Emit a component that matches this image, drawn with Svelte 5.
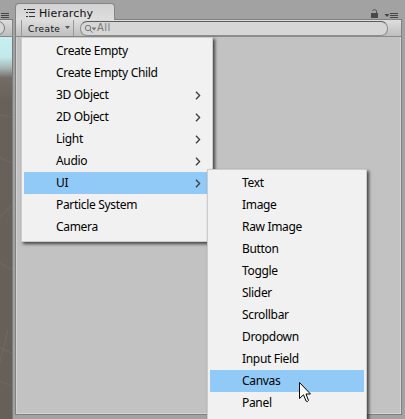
<script>
  const createItems = [
    { label: 'Create Empty' },
    { label: 'Create Empty Child' },
    { label: '3D Object', sub: true },
    { label: '2D Object', sub: true },
    { label: 'Light', sub: true },
    { label: 'Audio', sub: true },
    { label: 'UI', sub: true, active: true },
    { label: 'Particle System' },
    { label: 'Camera' }
  ];
  const uiItems = ['Text', 'Image', 'Raw Image', 'Button', 'Toggle', 'Slider', 'Scrollbar', 'Dropdown', 'Input Field', 'Canvas', 'Panel'];
</script>

<div class="window">
  <aside class="scene">
    <div class="scene-tab">
      <svg width="13" height="19" shape-rendering="crispEdges"><path d="M1 13.5h8M1 15.5h8M1 17.5h8" stroke="#444" /></svg>
    </div>
    <div class="scene-tools"><i></i></div>
    <div class="viewport">
      <svg width="12" height="368" fill="none" stroke="#7a736e" stroke-width="1">
        <path d="M0 42l12 2M0 78l12 2M0 121l12 5M0 180l12-12M0 226l12 7M8 293L0 325M0 311l12 5M0 344l12 5" opacity=".55" />
      </svg>
    </div>
  </aside>
  <main class="dock">
    <header>
      <div class="tab">
        <svg width="12" height="10" shape-rendering="crispEdges"><path d="M0 1.5h2M3 1.5h8M2 4.5h2M5 4.5h6M2 8.5h2M5 8.5h6" stroke="#333" /></svg>
        <span>Hierarchy</span>
      </div>
      <div class="tab-tools">
        <svg width="28" height="11">
          <path d="M0 4h7v5H0z" fill="#484848" />
          <path d="M1.500 2C1.500.2 5.500.2 5.500 2v2" fill="none" stroke="#555" />
          <path d="M13.500 5h5l-2.500 3z" fill="#444" />
          <path d="M19 4.500h8M19 6.500h8M19 8.500h8" stroke="#444" shape-rendering="crispEdges" />
        </svg>
      </div>
    </header>
    <section class="panel">
      <div class="toolbar">
        <div class="create">
          <span>Create</span>
          <svg width="5" height="3"><path d="M0 0h5L2.500 3z" fill="#555" /></svg>
        </div>
        <div class="search">
          <svg width="12" height="9" fill="none" stroke="#777"><circle cx="3" cy="3" r="2.700" /><path d="M5 5l2.500 2.700" /><path d="M6.500 2.500h5L9 5.500z" fill="#777" stroke="none" /></svg>
          <span>All</span>
        </div>
      </div>
    </section>
  </main>

  <div class="menu create-menu">
    {#each createItems as item}
      <div class="item" class:active={item.active}>
        <span>{item.label}</span>
        {#if item.sub}
          <svg width="6" height="9"><path d="M1 .8L4.600 4.500 1 8.200" fill="none" stroke="#3c3c3c" stroke-width="1.300" /></svg>
        {/if}
      </div>
    {/each}
  </div>
  <div class="menu ui-menu">
    {#each uiItems as label}
      <div class="item" class:active={label === 'Canvas'}><span>{label}</span></div>
    {/each}
  </div>
  <svg class="cursor" width="13" height="21">
    <path d="M.5.5V16.500L4.500 12.800 7 19Q8.500 20.500 9.500 18.500L7 12H11.500Z" fill="#fff" stroke="#000" />
  </svg>
</div>

<style>
  :global(body) { margin: 0; }
  .window { position: relative; display: flex; width: 405px; height: 419px; overflow: hidden; background: #a2a2a2; }
  svg { display: block; flex: none; }
  .scene { width: 13px; flex: none; display: flex; flex-direction: column; }
  .scene-tab { height: 19px; }
  .scene-tools { box-sizing: border-box; height: 18px; border-top: 1px solid #777; border-bottom: 1px solid #888; background: linear-gradient(#dcdcdc, #bcbcbc); overflow: hidden; border-right: 1px solid #888; }
  .scene-tools i { display: block; box-sizing: border-box; width: 20px; height: 14px; margin: 1px 0 0 -15px; border: 1px solid #777; border-radius: 7px; background: #d7d7d7; }
  .viewport { flex: 1; width: 12px; border-right: 1px solid #7b7b7b; background: linear-gradient(#c7eff0 0, #c3e9eb 20px, #a7b5b5 31px, #736b67 41px, #68605b 65px, #675f5a 100%); }
  .dock { width: 387px; flex: none; margin-left: 2px; display: flex; flex-direction: column; height: 415px; }
  header { display: flex; justify-content: space-between; height: 19px; }
  .tab { position: relative; box-sizing: border-box; display: flex; align-items: center; width: 100px; height: 17px; margin-top: 3px; padding: 2px 0 0 8px; border: 1px solid #858585; border-bottom: 0; border-radius: 4px 4px 0 0; background: linear-gradient(#d2d2d2, #dedede); font: 11px/15px "DejaVu Sans", sans-serif; color: #111; }
  .tab span { margin-left: 3px; letter-spacing: .1px; }
  .tab svg { margin-top: -1px; }
  .tab-tools { padding: 9px 3px 0 0; }
  .panel { box-sizing: border-box; flex: 1; border: 1px solid #808080; background: #c2c2c2; box-shadow: inset 1px 0 #d2d2d2, inset -1px -1px #d5d5d5; }
  .toolbar { box-sizing: border-box; display: flex; height: 17px; border-bottom: 1px solid #8b8b8b; background: linear-gradient(#dedede, #bebebe); }
  .create { box-sizing: border-box; display: flex; width: 53px; margin-left: 5px; padding-left: 6px; border-left: 1px solid #989898; border-right: 1px solid #989898; font: 9px/18px "DejaVu Sans", sans-serif; color: #111; }
  .create span { width: 37px; letter-spacing: .4px; }
  .create svg { margin-top: 6px; }
  .search { box-sizing: border-box; display: flex; width: 308px; height: 15px; margin: 1px 0 0 6px; padding-left: 4px; border: 1px solid #8d8d8d; border-top-color: #5c5c5c; border-radius: 7px; background: #d6d6d6; font: 10px/12px "DejaVu Sans", sans-serif; color: #777; }
  .search svg { margin-top: 3px; }
  .search span { letter-spacing: .5px; }
  .menu { position: absolute; box-sizing: border-box; border: 1px solid #ccc; background: #f1f1f1; padding: 2px; box-shadow: 2px 2px 3px rgba(0, 0, 0, .65); }
  .create-menu { left: 21px; top: 37px; width: 192px; height: 205px; }
  .ui-menu { left: 207px; top: 169px; width: 160px; height: 260px; }
  .item { box-sizing: border-box; display: flex; justify-content: space-between; align-items: center; height: 22px; padding: 0 9px 0 32px; font: 12px/22px "Noto Sans", sans-serif; color: #000; white-space: nowrap; }
  .item span { letter-spacing: -.32px; }
  .active { background: #91c9f7; }
  .cursor { position: absolute; left: 299px; top: 382px; }
</style>
